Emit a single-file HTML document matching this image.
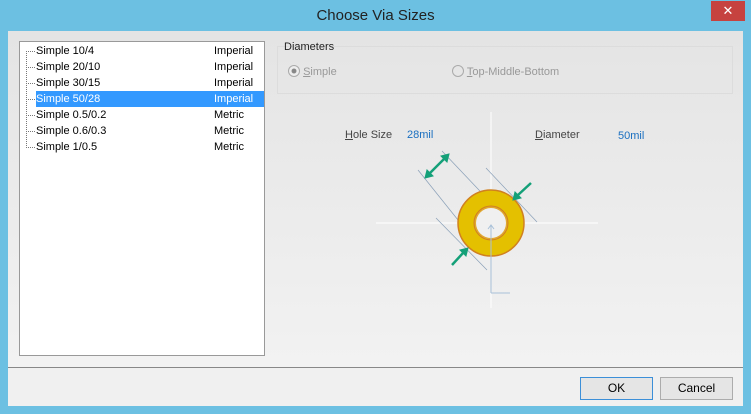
<!DOCTYPE html><html><head><style>
body{margin:0;width:751px;height:414px;background:#6cc0e2;font-family:"Liberation Sans",sans-serif;font-size:11px;position:relative;overflow:hidden}
.title{position:absolute;left:0;top:0;width:751px;height:31px;text-align:center;line-height:32px;font-size:15px;color:#222}
.close{position:absolute;left:711px;top:1px;width:34px;height:20px;background:#c6423f;color:#fff;text-align:center;line-height:20px;font-size:13px}
.client{position:absolute;left:8px;top:31px;width:735px;height:375px;background:#f0f0f0}
.panel{position:absolute;left:0;top:0;width:735px;height:336px;background:linear-gradient(#e4e4e4,#f2f2f2);border-bottom:1px solid #888}
.list{position:absolute;left:11px;top:10px;width:244px;height:313px;background:#fff;border:1px solid #999}
.row{position:absolute;left:16px;width:228px;height:16px;line-height:16px;color:#000}
.row span{position:absolute;left:178px}
.row:before{content:"";position:absolute;left:-10px;top:8px;width:9px;border-top:1px dotted #777}
.sel{background:#3399ff;color:#fff}
.vline{position:absolute;left:6px;top:9px;height:97px;border-left:1px dotted #777}
.grp{position:absolute;left:269px;top:15px;width:454px;height:46px;border:1px solid #dcdcdc}
.btn{position:absolute;top:346px;width:71px;height:21px;border:1px solid #acacac;background:#e5e5e5;text-align:center;line-height:21px;font-size:12px}
.lbl{position:absolute;color:#444;font-size:11px}
.blue{color:#1a6fc0}
</style></head><body>
<div class="title">Choose Via Sizes</div><div class="close">✕</div>
<div class="client">
<div class="panel">
<div class="list"><div class="vline"></div>
<div class="row" style="top:1px">Simple 10/4<span>Imperial</span></div>
<div class="row" style="top:17px">Simple 20/10<span>Imperial</span></div>
<div class="row" style="top:33px">Simple 30/15<span>Imperial</span></div>
<div class="row sel" style="top:49px">Simple 50/28<span>Imperial</span></div>
<div class="row" style="top:65px">Simple 0.5/0.2<span>Metric</span></div>
<div class="row" style="top:81px">Simple 0.6/0.3<span>Metric</span></div>
<div class="row" style="top:97px">Simple 1/0.5<span>Metric</span></div>
</div>
<div class="grp"></div>
<div class="lbl" style="left:276px;top:10px;color:#222">Diameters</div>
<div class="lbl" style="left:280px;top:34px;color:#999"><span style="display:inline-block;width:10px;height:10px;border:1px solid #aaa;border-radius:50%;vertical-align:-2px;background:radial-gradient(#888 30%,#eee 40%)"></span> <u>S</u>imple</div>
<div class="lbl" style="left:444px;top:34px;color:#999"><span style="display:inline-block;width:10px;height:10px;border:1px solid #aaa;border-radius:50%;vertical-align:-2px"></span> <u>T</u>op-Middle-Bottom</div>
<div class="lbl" style="left:337px;top:98px"><u>H</u>ole Size</div>
<div class="lbl blue" style="left:399px;top:98px">28mil</div>
<div class="lbl" style="left:527px;top:98px"><u>D</u>iameter</div>
<div class="lbl blue" style="left:610px;top:99px">50mil</div>
<svg style="position:absolute;left:0;top:0" width="735" height="336">
<g transform="translate(-8,-31)">
<line x1="376" y1="223" x2="598" y2="223" stroke="#fff"/>
<line x1="491" y1="112" x2="491" y2="308" stroke="#fff"/>
<g stroke="#8aa0b8" stroke-width="0.7">
<line x1="418" y1="170" x2="474" y2="240"/><line x1="442" y1="151" x2="496" y2="208"/>
<line x1="486" y1="168" x2="537" y2="222"/><line x1="436" y1="218" x2="487" y2="270"/>
</g>
<circle cx="491" cy="223" r="33" fill="#e4c000" stroke="#d08020" stroke-width="1.5"/>
<circle cx="491" cy="223" r="17" fill="#e0a830" stroke="#d08020"/>
<circle cx="491" cy="223" r="15" fill="#f0f0f0"/>
<g stroke="#a8c0d8" fill="none"><line x1="491" y1="225" x2="491" y2="293"/><line x1="491" y1="293" x2="510" y2="293"/><path d="M488 229 L491 225 L494 229"/></g>
<g stroke="#14a078" stroke-width="2.5" fill="#14a078">
<line x1="430" y1="173" x2="444" y2="159"/>
<path d="M425 178 L433 176 L427 170Z" stroke-width="1"/><path d="M449 154 L441 156 L447 162Z" stroke-width="1"/>
<line x1="531" y1="183" x2="518" y2="195"/><path d="M513 200 L521 198 L515 192Z" stroke-width="1"/>
<line x1="452" y1="265" x2="463" y2="253"/><path d="M468 248 L460 250 L466 256Z" stroke-width="1"/>
</g></g></svg>
</div>
<div class="btn" style="left:572px;border-color:#3c8fd8">OK</div>
<div class="btn" style="left:652px">Cancel</div>
</div>
</body></html>
